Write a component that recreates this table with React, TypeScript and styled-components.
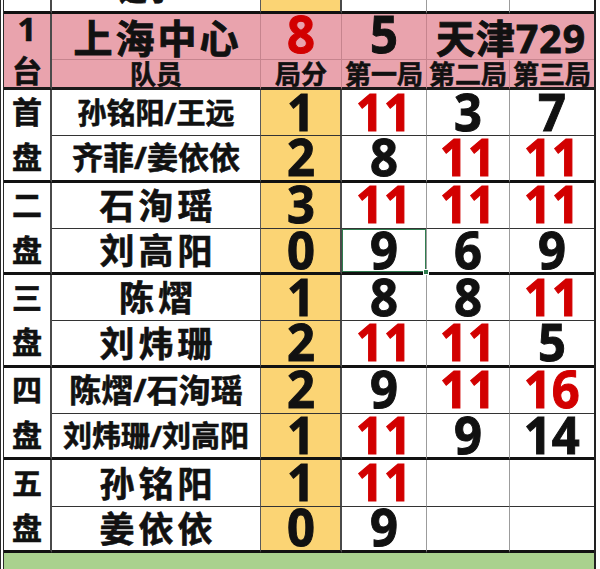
import React from "react";
import styled, { createGlobalStyle, css } from "styled-components";

const Global = createGlobalStyle`
  html, body { margin: 0; padding: 0; background: #ffffff; }
  body { width: 600px; height: 569px; overflow: hidden; }
`;

const FONT = `"Noto Sans", "Noto Sans CJK SC", sans-serif`;
const RED = "#d20000";
const INK = "#111111";

const bgMap = {
  white: "#ffffff",
  pink: "#e9a3ad",
  yellow: "#fbd474",
  green: "#a9d18e",
};

const lineMap = {
  none: "none",
  faint: "1px solid #9c9c9c",
  grey: "1px solid #5a5a5a",
  pinkLine: "1px solid #c6848e",
  stage: "2px solid #4a4a4a",
  mid: "1px solid #333333",
  thick: "3px solid #111111",
  heavy: "3px solid #1a1a1a",
};

type Tone = keyof typeof bgMap;
type Line = keyof typeof lineMap;

const Sheet = styled.div`
  width: 596px;
  height: 569px;
  box-sizing: border-box;
  display: grid;
  grid-template-columns: 48px 209px 81px 85px 83px 84px;
  grid-template-rows: 14px 46px 30px repeat(10, 46.3px) 16px;
  border-left: 4px double #2a2a2a;
  border-right: 2px solid #222222;
  font-family: ${FONT};
  font-weight: 700;
  color: ${INK};
  -webkit-text-stroke: 0.6px currentColor;
`;

const Cell = styled.div<{
  $bg: Tone;
  $right: Line;
  $bottom: Line;
  $span?: number;
  $rows?: number;
  $clip?: boolean;
  $selected?: boolean;
}>`
  box-sizing: border-box;
  position: relative;
  display: flex;
  align-items: center;
  justify-content: center;
  background: ${(p) => bgMap[p.$bg]};
  border-right: ${(p) => lineMap[p.$right]};
  border-bottom: ${(p) => lineMap[p.$bottom]};
  ${(p) => p.$span && css`grid-column: span ${p.$span};`}
  ${(p) => p.$rows && css`grid-row: span ${p.$rows};`}
  ${(p) => p.$clip && css`overflow: hidden; align-items: flex-end;`}
  ${(p) => p.$selected && css`box-shadow: inset 0 0 0 1px #2f7d4f;`}
`;

const StageCell = styled(Cell)`
  flex-direction: column;
  justify-content: space-around;
`;

const TableNoCell = styled(Cell)`
  flex-direction: column;
  justify-content: flex-start;
  gap: 12px;
`;

const Handle = styled.span`
  position: absolute;
  right: -3px;
  bottom: -3px;
  width: 4px;
  height: 4px;
  background: #2f7d4f;
  border: 1px solid #ffffff;
  z-index: 2;
`;

const CropText = styled.span`
  font-size: 28px;
  line-height: 1;
  margin: 0 18px 7px 0;
  white-space: nowrap;
`;

const TableNo = styled.span`
  font-size: 33px;
  line-height: 30px;
`;

const TableChar = styled.span`
  font-size: 30px;
  line-height: 30px;
`;

const TeamName = styled.span<{ $track: number }>`
  font-size: 39px;
  line-height: 40px;
  white-space: nowrap;
  letter-spacing: ${(p) => p.$track}px;
  margin-right: -${(p) => p.$track}px;
  transform: translateY(1px);
  -webkit-text-stroke: 0.9px currentColor;
`;

const HeadLabel = styled.span`
  font-size: 26px;
  line-height: 26px;
  white-space: nowrap;
`;

const StageChar = styled.span`
  font-size: 30px;
  line-height: 1;
`;

const PlayerName = styled.span<{ $size: number; $track: number }>`
  font-size: ${(p) => p.$size}px;
  letter-spacing: ${(p) => p.$track}px;
  margin-right: -${(p) => p.$track}px;
  line-height: 1;
  white-space: nowrap;
`;

const Digit = styled.span<{ $red?: boolean }>`
  font-family: "Noto Sans", sans-serif;
  font-size: 52px;
  line-height: 40px;
  color: ${(p) => (p.$red ? RED : INK)};
  transform: translateY(-2px) scaleX(0.94);
  -webkit-text-stroke: 1px currentColor;
`;

const HeadDigit = styled(Digit)`
  transform: translateY(-4px) scaleX(0.94);
`;

type Row = {
  name: string;
  size: number;
  track: number;
  score: number;
  games: (number | null)[];
};

type Group = { stage: [string, string]; rows: [Row, Row] };

const groups: Group[] = [
  {
    stage: ["首", "盘"],
    rows: [
      { name: "孙铭阳/王远", size: 29, track: 0, score: 1, games: [11, 3, 7] },
      { name: "齐菲/姜依依", size: 31, track: 0, score: 2, games: [8, 11, 11] },
    ],
  },
  {
    stage: ["二", "盘"],
    rows: [
      { name: "石洵瑶", size: 35, track: 4, score: 3, games: [11, 11, 11] },
      { name: "刘高阳", size: 35, track: 4, score: 0, games: [9, 6, 9] },
    ],
  },
  {
    stage: ["三", "盘"],
    rows: [
      { name: "陈熠", size: 35, track: 4, score: 1, games: [8, 8, 11] },
      { name: "刘炜珊", size: 35, track: 4, score: 2, games: [11, 11, 5] },
    ],
  },
  {
    stage: ["四", "盘"],
    rows: [
      { name: "陈熠/石洵瑶", size: 32, track: 0, score: 2, games: [9, 11, 16] },
      { name: "刘炜珊/刘高阳", size: 29, track: 0, score: 1, games: [11, 9, 14] },
    ],
  },
  {
    stage: ["五", "盘"],
    rows: [
      { name: "孙铭阳", size: 35, track: 4, score: 1, games: [11, null, null] },
      { name: "姜依依", size: 35, track: 4, score: 0, games: [9, null, null] },
    ],
  },
];

const gameRight: Line[] = ["faint", "faint", "none"];

export default function App() {
  return (
    <>
      <Global />
      <Sheet>
        {/* partially visible row above */}
        <Cell $bg="white" $right="stage" $bottom="thick" />
        <Cell $bg="white" $right="grey" $bottom="thick" $clip>
          <CropText>选手</CropText>
        </Cell>
        <Cell $bg="yellow" $right="stage" $bottom="thick" />
        <Cell $bg="white" $right="faint" $bottom="thick" />
        <Cell $bg="white" $right="faint" $bottom="thick" />
        <Cell $bg="white" $right="none" $bottom="thick" />

        {/* header row 1 */}
        <TableNoCell $bg="pink" $right="stage" $bottom="heavy" $rows={2}>
          <TableNo>1</TableNo>
          <TableChar>台</TableChar>
        </TableNoCell>
        <Cell $bg="pink" $right="pinkLine" $bottom="pinkLine">
          <TeamName $track={3}>上海中心</TeamName>
        </Cell>
        <Cell $bg="pink" $right="pinkLine" $bottom="pinkLine">
          <HeadDigit $red>8</HeadDigit>
        </Cell>
        <Cell $bg="pink" $right="pinkLine" $bottom="pinkLine">
          <HeadDigit>5</HeadDigit>
        </Cell>
        <Cell $bg="pink" $right="none" $bottom="pinkLine" $span={2}>
          <TeamName $track={1}>天津729</TeamName>
        </Cell>

        {/* header row 2 */}
        <Cell $bg="pink" $right="pinkLine" $bottom="heavy">
          <HeadLabel>队员</HeadLabel>
        </Cell>
        <Cell $bg="pink" $right="pinkLine" $bottom="heavy">
          <HeadLabel>局分</HeadLabel>
        </Cell>
        <Cell $bg="pink" $right="pinkLine" $bottom="heavy">
          <HeadLabel>第一局</HeadLabel>
        </Cell>
        <Cell $bg="pink" $right="pinkLine" $bottom="heavy">
          <HeadLabel>第二局</HeadLabel>
        </Cell>
        <Cell $bg="pink" $right="none" $bottom="heavy">
          <HeadLabel>第三局</HeadLabel>
        </Cell>

        {groups.map((g, gi) => (
          <React.Fragment key={gi}>
            <StageCell $bg="white" $right="stage" $bottom="thick" $rows={2}>
              <StageChar>{g.stage[0]}</StageChar>
              <StageChar>{g.stage[1]}</StageChar>
            </StageCell>
            {g.rows.map((r, ri) => {
              const other = g.rows[1 - ri];
              const bottom: Line = ri === 0 ? "mid" : "thick";
              return (
                <React.Fragment key={ri}>
                  <Cell $bg="white" $right="grey" $bottom={bottom}>
                    <PlayerName $size={r.size} $track={r.track}>
                      {r.name}
                    </PlayerName>
                  </Cell>
                  <Cell $bg="yellow" $right="stage" $bottom={bottom}>
                    <Digit>{r.score}</Digit>
                  </Cell>
                  {r.games.map((v, k) => {
                    const o = other.games[k];
                    const selected = gi === 1 && ri === 1 && k === 0;
                    return (
                      <Cell
                        key={k}
                        $bg="white"
                        $right={gameRight[k]}
                        $bottom={bottom}
                        $selected={selected}
                      >
                        {v !== null && (
                          <Digit $red={o !== null && v > o}>{v}</Digit>
                        )}
                        {selected && <Handle />}
                      </Cell>
                    );
                  })}
                </React.Fragment>
              );
            })}
          </React.Fragment>
        ))}

        <Cell $bg="green" $right="none" $bottom="none" $span={6} />
      </Sheet>
    </>
  );
}
